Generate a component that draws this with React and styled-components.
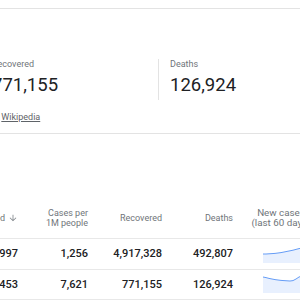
import styled, { createGlobalStyle } from "styled-components";

const GlobalStyle = createGlobalStyle`
  html, body {
    margin: 0;
    padding: 0;
    background: #fff;
  }
  body {
    font-family: Roboto, "Noto Sans", Arial, sans-serif;
    color: #202124;
    overflow: hidden;
  }
`;

const stats = [
  { label: "Confirmed", value: "2,515,453" },
  { label: "Recovered", value: "771,155" },
  { label: "Deaths", value: "126,924" },
];

const rows = [
  {
    name: "Worldwide",
    confirmed: "9,796,997",
    perMillion: "1,256",
    recovered: "4,917,328",
    deaths: "492,807",
    trend: [9, 9, 8.8, 8.6, 8.4, 8, 7.6, 7, 6.4, 5.8, 5.2, 4.4, 3.6, 3, 2.4, 1.8, 1],
  },
  {
    name: "United States",
    confirmed: "2,515,453",
    perMillion: "7,621",
    recovered: "771,155",
    deaths: "126,924",
    trend: [2, 2.6, 3.4, 4, 4.6, 5, 5.4, 5.6, 5.8, 6, 5.6, 4, 2, 1, 0.6, 0.5, 0.5],
  },
];

function Sparkline({ points }) {
  const w = 60;
  const h = 18;
  const scale = 48 / (points.length - 1);
  const line = points.map((y, i) => `${i ? "L" : "M"}${(i * scale).toFixed(1)} ${y}`).join(" ");
  const full = `${line} L${w} ${points[points.length - 1]}`;
  return (
    <svg width={w} height={h} viewBox={`0 0 ${w} ${h}`}>
      <path d={`${full} L${w} ${h} L0 ${h} Z`} fill="#e8f0fe" />
      <path d={full} fill="none" stroke="#669df6" strokeWidth="1" />
    </svg>
  );
}

function SortArrow() {
  return (
    <svg width="10" height="10" viewBox="0 0 24 24">
      <path
        fill="#80868b"
        d="M20 12l-1.41-1.41L13 16.17V4h-2v12.17l-5.58-5.59L4 12l8 8 8-8z"
      />
    </svg>
  );
}

export default function App() {
  return (
    <Page>
      <GlobalStyle />
      <StatsPanel>
        <StatsRow>
          {stats.map((s, i) => (
            <Stat key={s.label} divided={i > 0}>
              <StatLabel>{s.label}</StatLabel>
              <StatValue>{s.value}</StatValue>
            </Stat>
          ))}
        </StatsRow>
        <Source>
          Source: <a href="#">Wikipedia</a>
        </Source>
      </StatsPanel>
      <TableSection>
        <HeaderRow>
          <HeadCell align="left">Location</HeadCell>
          <HeadCell>
            Confirmed
            <SortArrow />
          </HeadCell>
          <HeadCell>
            Cases per
            <br />
            1M people
          </HeadCell>
          <HeadCell>Recovered</HeadCell>
          <HeadCell>Deaths</HeadCell>
          <TrendHead align="center">
            New cases
            <br />
            (last 60 days)
          </TrendHead>
        </HeaderRow>
        {rows.map((r) => (
          <Row key={r.name}>
            <Cell align="left">{r.name}</Cell>
            <Cell>{r.confirmed}</Cell>
            <Cell>{r.perMillion}</Cell>
            <Cell>{r.recovered}</Cell>
            <Cell>{r.deaths}</Cell>
            <TrendCell>
              <Sparkline points={r.trend} />
            </TrendCell>
          </Row>
        ))}
      </TableSection>
    </Page>
  );
}

const Page = styled.div`
  width: 300px;
  height: 300px;
  padding-top: 8px;
  box-sizing: border-box;
  overflow: hidden;
`;

const StatsPanel = styled.section`
  border-top: 1px solid #e3e3e3;
  border-bottom: 1px solid #e3e3e3;
  padding: 50px 0 10px;
`;

const StatsRow = styled.div`
  display: flex;
  margin-left: -198px;
`;

const Stat = styled.div`
  flex: 0 0 178px;
  box-sizing: border-box;
  padding: 0 0 4px 11px;
  border-left: 1px solid ${(p) => (p.divided ? "#e3e3e3" : "transparent")};
`;

const StatLabel = styled.div`
  font-size: 9px;
  line-height: 11px;
  color: #70757a;
`;

const StatValue = styled.div`
  margin-top: 4px;
  font-size: 18.5px;
  line-height: 22px;
  color: #202124;
`;

const Source = styled.div`
  margin: 11px 0 0 -31px;
  font-size: 9px;
  line-height: 12px;
  color: #70757a;

  a {
    color: #5f6368;
    text-decoration: underline;
  }
`;

const TableSection = styled.section`
  padding-top: 64px;
`;

const grid = `
  display: grid;
  grid-template-columns: 120px 80px 70px 74px 71px 96px;
  margin-left: -182px;
  align-items: center;
  border-bottom: 1px solid #e8e8e8;
`;

const HeaderRow = styled.div`
  ${grid}
  height: 40px;
`;

const Row = styled.div`
  ${grid}
  height: 29.5px;
`;

const HeadCell = styled.div`
  display: flex;
  align-items: center;
  justify-content: ${(p) =>
    p.align === "left" ? "flex-start" : p.align === "center" ? "center" : "flex-end"};
  gap: 3px;
  text-align: ${(p) => p.align || "right"};
  font-size: 9px;
  line-height: 10px;
  color: #70757a;
  white-space: nowrap;
`;

const TrendHead = styled(HeadCell)`
  font-size: 9.8px;
`;

const Cell = styled.div`
  display: flex;
  align-items: center;
  justify-content: ${(p) => (p.align === "left" ? "flex-start" : "flex-end")};
  font-size: 11px;
  font-weight: 500;
  color: #202124;
  white-space: nowrap;
`;

const TrendCell = styled.div`
  display: flex;
  align-items: center;
  padding-left: 30px;
`;
